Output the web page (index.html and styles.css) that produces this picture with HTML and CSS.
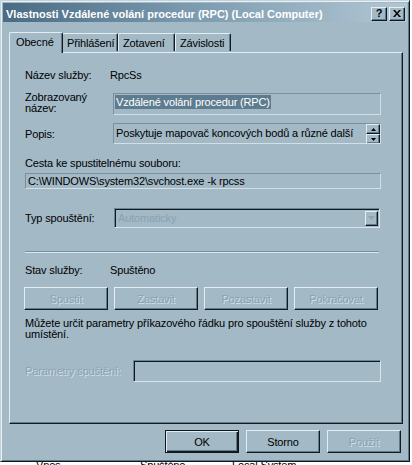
FILE: index.html
```html
<!DOCTYPE html>
<html>
<head>
<meta charset="utf-8">
<link rel="stylesheet" href="styles.css">
</head>
<body>
<div class="window">
  <div class="titlebar">
    <span class="title">Vlastnosti Vzdálené volání procedur (RPC) (Local Computer)</span>
    <div class="capbtns">
      <span class="capbtn help">?</span>
      <span class="capbtn close"><svg width="8" height="7" viewBox="0 0 8 7"><path d="M0 0h2l2 2.5L6 0h2L5 3.5 8 7H6L4 4.5 2 7H0l3-3.5z" fill="#000"/></svg></span>
    </div>
  </div>
  <div class="tabs">
    <div class="tab active">Obecné</div>
    <div class="tab">Přihlášení</div>
    <div class="tab">Zotavení</div>
    <div class="tab">Závislosti</div>
  </div>
  <div class="panel">
    <div class="row r1">
      <span class="label">Název služby:</span>
      <span class="value">RpcSs</span>
    </div>
    <div class="row r2">
      <span class="label two">Zobrazovaný<br>název:</span>
      <div class="field flat wide"><span class="sel">Vzdálené volání procedur (RPC)</span></div>
    </div>
    <div class="row r3">
      <span class="label lowered">Popis:</span>
      <div class="field flat wide memo">
        <span class="memotext">Poskytuje mapovač koncových bodů a různé další</span>
        <div class="spin">
          <span class="spinbtn"><svg width="5" height="3" viewBox="0 0 5 3"><path d="M2.5 0L5 3H0z" fill="#000"/></svg></span>
          <span class="spinbtn"><svg width="5" height="3" viewBox="0 0 5 3"><path d="M0 0h5L2.5 3z" fill="#000"/></svg></span>
        </div>
      </div>
    </div>
    <div class="row r4">
      <span class="label">Cesta ke spustitelnému souboru:</span>
    </div>
    <div class="row r5">
      <div class="field flat full">C:\WINDOWS\system32\svchost.exe -k rpcss</div>
    </div>
    <div class="row r6">
      <span class="label">Typ spouštění:</span>
      <div class="combo">
        <span class="combotext">Automaticky</span>
        <span class="dropbtn"><svg width="7" height="4" viewBox="0 0 7 4"><path d="M0 0h7L3.5 4z" fill="#8ea5b3"/></svg></span>
      </div>
    </div>
    <div class="separator"></div>
    <div class="row r7">
      <span class="label">Stav služby:</span>
      <span class="value">Spuštěno</span>
    </div>
    <div class="row r8">
      <button class="btn disabled">Spustit</button>
      <button class="btn disabled">Zastavit</button>
      <button class="btn disabled">Pozastavit</button>
      <button class="btn disabled">Pokračovat</button>
    </div>
    <p class="note">Můžete určit parametry příkazového řádku pro spouštění služby z tohoto umístění.</p>
    <div class="row r10">
      <span class="label dis">Parametry spuštění:</span>
      <div class="field sunken params"></div>
    </div>
  </div>
  <div class="footer">
    <button class="btn default">OK</button>
    <button class="btn">Storno</button>
    <button class="btn disabled">Použít</button>
  </div>
</div>
<div class="below">
  <span class="frag f1">Vnos</span>
  <span class="frag f2">Spuštěno</span>
  <span class="frag f3">Local System</span>
</div>
</body>
</html>
```

FILE: styles.css
```css
* { box-sizing: border-box; }

html, body {
  margin: 0;
  padding: 0;
  background: #ffffff;
  overflow: hidden;
}

body {
  font-family: "Liberation Sans", Arial, sans-serif;
  font-size: 11px;
  letter-spacing: -0.15px;
  color: #000;
  width: 412px;
  height: 465px;
}

.window {
  width: 410px;
  height: 462px;
  background: #a3b9c6;
  border-top: 1px solid #c3d3dc;
  border-left: 1px solid #c3d3dc;
  border-right: 1px solid #0f181d;
  border-bottom: 1px solid #0f181d;
  box-shadow: inset 1px 1px 0 #e8f0f4, inset -1px -1px 0 #5f7888;
  padding: 2px 2px 0 2px;
  display: flex;
  flex-direction: column;
}

.titlebar {
  height: 19px;
  background: linear-gradient(to right, #4a6b83 0%, #7a99ae 45%, #b2c7d4 100%);
  display: flex;
  align-items: center;
  justify-content: space-between;
  padding: 0 2px 0 3px;
}

.title {
  color: #ffffff;
  font-weight: bold;
  font-size: 11px;
  letter-spacing: 0;
  white-space: nowrap;
  padding-top: 2px;
}

.capbtns {
  display: flex;
  gap: 2px;
  padding-top: 2px;
}

.capbtn {
  width: 16px;
  height: 14px;
  background: #a3b9c6;
  border-top: 1px solid #e6eef2;
  border-left: 1px solid #e6eef2;
  border-right: 1px solid #0f181d;
  border-bottom: 1px solid #0f181d;
  box-shadow: inset -1px -1px 0 #607a8a;
  display: flex;
  align-items: center;
  justify-content: center;
}

.help {
  font-weight: bold;
  font-size: 11px;
  line-height: 12px;
  padding-bottom: 1px;
}

.tabs {
  display: flex;
  align-items: flex-end;
  margin: 9px 0 0 6px;
  height: 21px;
  position: relative;
  z-index: 2;
}

.tab {
  height: 18px;
  padding: 0 5px 0 4px;
  display: flex;
  align-items: center;
  border-top: 1px solid #e4edf2;
  border-left: 1px solid #e4edf2;
  border-right: 1px solid #121b21;
  box-shadow: inset -1px 0 0 #607a8a;
  background: #a3b9c6;
  border-top-left-radius: 2px;
  border-top-right-radius: 2px;
  margin-bottom: 1px;
}

.tab:nth-child(2) { width: 56px; }
.tab:nth-child(3) { width: 57px; }
.tab:nth-child(4) { width: 56px; }

.tab.active {
  width: 54px;
  height: 21px;
  padding-left: 6px;
  padding-bottom: 2px;
  margin-bottom: -1px;
  margin-right: -1px;
  position: relative;
  z-index: 3;
}

.panel {
  margin-left: 6px;
  width: 394px;
  height: 372px;
  border-top: 1px solid #e4edf2;
  border-left: 1px solid #e4edf2;
  border-right: 1px solid #121b21;
  border-bottom: 1px solid #121b21;
  box-shadow: inset -1px -1px 0 #607a8a;
  padding: 0 20px 0 15px;
  display: flex;
  flex-direction: column;
  position: relative;
  z-index: 1;
}

.row {
  display: flex;
  align-items: center;
  flex: none;
}

.label {
  width: 85px;
  flex: none;
  white-space: nowrap;
  line-height: 13px;
}

.label.two {
  line-height: 11px;
  align-self: flex-start;
  margin-top: -1px;
}

.label.lowered { padding-top: 2px; }

.label.dis {
  width: 108px;
  color: #8aa2b1;
  text-shadow: 1px 1px 0 #d3e0e7;
}

.value { line-height: 13px; }

.r1 { margin-top: 15px; height: 14px; }
.r2 { margin-top: 11px; height: 22px; }
.r3 { margin-top: 8px; height: 21px; }
.r4 { margin-top: 12px; height: 14px; }
.r5 { margin-top: 3px; height: 16px; }
.r6 { margin-top: 19px; height: 20px; }
.r7 { margin-top: 10px; height: 14px; }
.r8 { margin-top: 10px; height: 23px; gap: 6px; margin-left: -1px; }
.r10 { margin-top: 20px; height: 22px; }

.field {
  height: 100%;
  background: #a3b9c6;
  display: flex;
  align-items: center;
  white-space: nowrap;
  overflow: hidden;
}

.field.flat {
  border-top: 1px solid #7890a0;
  border-left: 1px solid #7890a0;
  border-right: 1px solid #d2dfe6;
  border-bottom: 1px solid #d2dfe6;
}

.field.wide {
  margin-left: 3px;
  width: 268px;
  padding-left: 1px;
}

.field.full {
  width: 356px;
  padding-left: 2px;
}

.sel {
  background: #5e7c90;
  color: #ffffff;
  line-height: 14px;
  padding: 0 1px;
  align-self: flex-start;
  margin-top: 1px;
}

.memo {
  align-items: flex-start;
  justify-content: space-between;
  padding-right: 0;
}

.memotext {
  line-height: 14px;
  margin-top: 2px;
  padding-left: 1px;
}

.spin {
  display: flex;
  flex-direction: column;
  width: 14px;
  margin-top: 0;
}

.spinbtn {
  height: 10px;
  width: 14px;
  background: #a3b9c6;
  border-top: 1px solid #e4edf2;
  border-left: 1px solid #e4edf2;
  border-right: 1px solid #121b21;
  border-bottom: 1px solid #121b21;
  box-shadow: inset -1px -1px 0 #607a8a;
  display: flex;
  align-items: center;
  justify-content: center;
}

.combo {
  margin-left: 4px;
  width: 266px;
  height: 100%;
  border-top: 1px solid #6c8594;
  border-left: 1px solid #6c8594;
  border-right: 1px solid #d8e4ea;
  border-bottom: 1px solid #d8e4ea;
  box-shadow: inset 1px 1px 0 #0f181d;
  display: flex;
  align-items: center;
  justify-content: space-between;
  padding: 2px 1px 2px 3px;
}

.combotext {
  color: #8aa2b1;
}

.dropbtn {
  width: 13px;
  height: 15px;
  background: #a3b9c6;
  border-top: 1px solid #e4edf2;
  border-left: 1px solid #e4edf2;
  border-right: 1px solid #121b21;
  border-bottom: 1px solid #121b21;
  box-shadow: inset -1px -1px 0 #607a8a;
  display: flex;
  align-items: center;
  justify-content: center;
}

.separator {
  margin-top: 23px;
  width: 354px;
  height: 2px;
  border-top: 1px solid #7890a0;
  border-bottom: 1px solid #dce7ed;
  flex: none;
}

.btn {
  font-family: inherit;
  font-size: 11px;
  letter-spacing: -0.15px;
  width: 84px;
  height: 23px;
  padding: 0;
  margin: 0;
  background: #a3b9c6;
  color: #000;
  border-top: 1px solid #e4edf2;
  border-left: 1px solid #e4edf2;
  border-right: 1px solid #121b21;
  border-bottom: 1px solid #121b21;
  box-shadow: inset -1px -1px 0 #607a8a;
  border-radius: 0;
}

.btn.disabled {
  color: #8aa2b1;
  text-shadow: 1px 1px 0 #d3e0e7;
}

.note {
  margin: 8px 0 0 0;
  line-height: 11px;
  width: 350px;
  flex: none;
}

.field.sunken {
  border-top: 1px solid #6c8594;
  border-left: 1px solid #6c8594;
  border-right: 1px solid #d8e4ea;
  border-bottom: 1px solid #d8e4ea;
  box-shadow: inset 1px 1px 0 #0f181d;
}

.params {
  width: 248px;
}

.footer {
  display: flex;
  justify-content: flex-end;
  gap: 7px;
  margin-top: 6px;
  padding-right: 6px;
}

.footer .btn {
  width: 74px;
}

.btn.default {
  border: 1px solid #0f181d;
  box-shadow: inset 1px 1px 0 #e4edf2, inset -1px -1px 0 #121b21, inset -2px -2px 0 #607a8a;
}

.below {
  position: relative;
  height: 3px;
  overflow: hidden;
  display: flex;
  line-height: 11px;
}

.frag {
  position: absolute;
  top: -2px;
}

.f1 { left: 36px; }
.f2 { left: 140px; }
.f3 { left: 232px; }
```
